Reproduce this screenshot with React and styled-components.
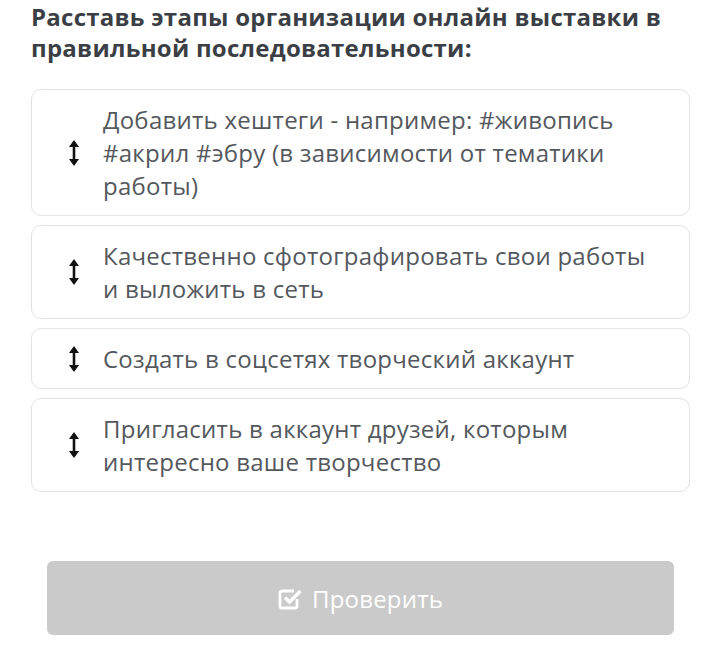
import React from "react";
import styled, { createGlobalStyle } from "styled-components";

const GlobalStyle = createGlobalStyle`
    body {
        margin: 0;
        background: #ffffff;
        font-family: "Open Sans", "Liberation Sans", sans-serif;
    }
`;

const Page = styled.div`
    width: 720px;
    padding: 0 30px 0 31px;
    box-sizing: border-box;
`;

const Title = styled.h2`
    margin: 0;
    padding-top: 1px;
    font-size: 24px;
    line-height: 31px;
    font-weight: 700;
    color: #3b3f45;
    letter-spacing: 0.25px;
`;

const List = styled.div`
    display: flex;
    flex-direction: column;
    gap: 9px;
    margin-top: 26px;
`;

const Card = styled.div`
    display: flex;
    align-items: center;
    gap: 23px;
    padding: 13px 40px 13px 36px;
    border: 1px solid #e3e3e3;
    border-radius: 10px;
    background: #fff;
`;

const Handle = styled.div`
    flex: 0 0 12px;
    display: flex;
    justify-content: center;
`;

const Text = styled.div`
    font-size: 24px;
    line-height: 33px;
    color: #54585d;
    letter-spacing: 0.25px;
`;

const Footer = styled.div`
    padding: 69px 16px 0;
`;

const CheckButton = styled.button`
    width: 100%;
    height: 74px;
    border: none;
    border-radius: 6px;
    background: #cacaca;
    color: #fff;
    font-family: inherit;
    font-size: 24px;
    letter-spacing: 0.2px;
    display: flex;
    align-items: center;
    justify-content: center;
    gap: 9px;
`;

const ArrowIcon = () => (
    <svg width="12" height="28" viewBox="0 0 12 28">
        <path d="M6 3 L6 25" stroke="#111" strokeWidth="2.6" />
        <path d="M1 8 L6 1 L11 8 Z" fill="#111" />
        <path d="M1 20 L6 27 L11 20 Z" fill="#111" />
    </svg>
);

const CheckIcon = () => (
    <svg width="25" height="24" viewBox="0 0 25 24" fill="none">
        <path d="M19 13V20a2 2 0 0 1-2 2H4a2 2 0 0 1-2-2V7a2 2 0 0 1 2-2h12" stroke="#fff" strokeWidth="2.8" />
        <path d="M7 11.5l4.5 4.5 11-11" stroke="#fff" strokeWidth="3.4" />
    </svg>
);

const items = [
    "Добавить хештеги - например: #живопись #акрил #эбру (в зависимости от тематики работы)",
    "Качественно сфотографировать свои работы и выложить в сеть",
    "Создать в соцсетях творческий аккаунт",
    "Пригласить в аккаунт друзей, которым интересно ваше творчество",
];

export default function App() {
    return (
        <Page>
            <GlobalStyle />
            <Title>Расставь этапы организации онлайн выставки в правильной последовательности:</Title>
            <List>
                {items.map((t) => (
                    <Card key={t}>
                        <Handle><ArrowIcon /></Handle>
                        <Text>{t}</Text>
                    </Card>
                ))}
            </List>
            <Footer>
                <CheckButton><CheckIcon />Проверить</CheckButton>
            </Footer>
        </Page>
    );
}
